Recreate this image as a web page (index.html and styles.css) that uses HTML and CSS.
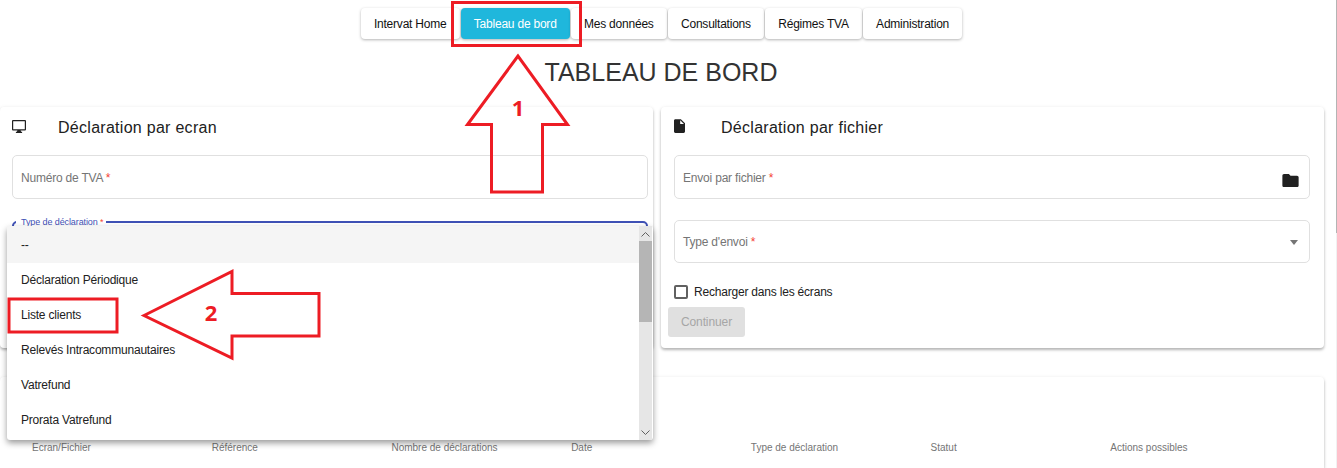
FILE: index.html
```html
<!DOCTYPE html>
<html lang="fr">
<head>
<meta charset="utf-8">
<title>Tableau de bord</title>
<link rel="stylesheet" href="styles.css">
</head>
<body>
<div class="page">
  <main class="main">
    <nav class="nav">
      <a class="nav-btn">Intervat Home</a>
      <a class="nav-btn nav-btn-active">Tableau de bord</a>
      <a class="nav-btn">Mes données</a>
      <a class="nav-btn">Consultations</a>
      <a class="nav-btn">Régimes TVA</a>
      <a class="nav-btn">Administration</a>
    </nav>
    <h1 class="title">TABLEAU DE BORD</h1>
    <div class="cards">
      <section class="card card-left">
        <header class="card-head">
          <svg class="icon icon-monitor" viewBox="0 0 14 13"><path fill-rule="evenodd" d="M1 0h12a1 1 0 0 1 1 1v8.400a1 1 0 0 1-1 1H8.600l.5 1.400h1v1.200H3.900v-1.200h1l.5-1.400H1a1 1 0 0 1-1-1V1a1 1 0 0 1 1-1zm.2 1.200v8h11.600v-8z"/></svg>
          <h2 class="card-title">Déclaration par ecran</h2>
        </header>
        <div class="field field-first"><span class="label">Numéro de TVA <i class="req">*</i></span></div>
        <fieldset class="focus-field">
          <legend class="focus-legend">Type de déclaration <i class="req-blue">*</i></legend>
        </fieldset>
        <div class="menu">
          <ul class="menu-list">
            <li class="menu-item menu-item-selected">--</li>
            <li class="menu-item">Déclaration Périodique</li>
            <li class="menu-item">Liste clients</li>
            <li class="menu-item">Relevés Intracommunautaires</li>
            <li class="menu-item">Vatrefund</li>
            <li class="menu-item">Prorata Vatrefund</li>
          </ul>
          <div class="menu-scroll">
            <svg class="chev" viewBox="0 0 9 5"><path d="M.5 4.500l4-4 4 4"/></svg>
            <div class="menu-thumb"></div>
            <svg class="chev chev-down" viewBox="0 0 9 5"><path d="M.5.500l4 4 4-4"/></svg>
          </div>
        </div>
      </section>
      <section class="card card-right">
        <header class="card-head">
          <svg class="icon icon-file" viewBox="4 2 16 20"><path d="M6 2c-1.100 0-1.990.9-1.990 2L4 20c0 1.100.89 2 1.990 2H18c1.100 0 2-.9 2-2V8l-6-6H6zm7 7V3.500L18.500 9H13z"/></svg>
          <h2 class="card-title">Déclaration par fichier</h2>
        </header>
        <div class="field field-first field-right"><span class="label">Envoi par fichier <i class="req">*</i></span>
          <svg class="icon-folder" viewBox="2 4 20 16"><path d="M10 4H4c-1.100 0-1.990.9-1.990 2L2 18c0 1.100.9 2 2 2h16c1.100 0 2-.9 2-2V8c0-1.100-.9-2-2-2h-8l-2-2z"/></svg>
        </div>
        <div class="field field-second field-right"><span class="label">Type d'envoi <i class="req">*</i></span><span class="caret"></span></div>
        <label class="check-row"><span class="checkbox"></span><span class="check-label">Recharger dans les écrans</span></label>
        <button class="btn-disabled" type="button">Continuer</button>
      </section>
    </div>
    <section class="card card-table">
      <div class="table-head">
        <span>Ecran/Fichier</span>
        <span>Référence</span>
        <span>Nombre de déclarations</span>
        <span>Date</span>
        <span>Type de déclaration</span>
        <span>Statut</span>
        <span>Actions possibles</span>
      </div>
    </section>
  </main>
  <div class="rail"><div class="rail-thumb"></div></div>
</div>
<svg class="annot" viewBox="0 0 1337 468">
  <rect class="annot-line" x="452.500" y="2.500" width="128" height="43"/>
  <polygon class="annot-line" points="518,56 467.500,124.500 491.500,124.500 491.500,192 542.500,192 542.500,124.500 567.500,124.500"/>
  <rect class="annot-line" x="9" y="299" width="108" height="33"/>
  <polygon class="annot-line" points="144,315.500 232,271.500 232,293.500 319,293.500 319,336 232,336 232,358"/>
  <text class="annot-num" x="518" y="116">1</text>
  <text class="annot-num" x="211" y="321">2</text>
</svg>
</body>
</html>
```
FILE: styles.css
```css
* { box-sizing: border-box; }
html, body { margin: 0; height: 468px; overflow: hidden; background: #fff; }
body { font-family: "Liberation Sans", Arial, sans-serif; color: #212121; position: relative; }
.page { display: flex; height: 468px; }
.main { flex: 1; padding-right: 12px; min-width: 0; }
.rail { width: 1px; background: #f1f1f1; }
.rail-thumb { height: 233px; background: #b4b4b4; }

.nav { display: flex; justify-content: center; gap: 1px; padding-top: 8px; padding-right: 1px; }
.nav-btn { height: 31px; padding: 0 13.200px; display: flex; align-items: center; font-size: 12px; letter-spacing: -.22px; color: #111; background: #fff; border-radius: 4px; box-shadow: 0 1px 3px rgba(0,0,0,.3); }
.nav-btn-active { background: #1fb7dc; color: #fff; }

.title { margin: 18px 0 20px; padding-right: 2px; height: 30px; line-height: 30px; font-size: 25px; font-weight: 400; text-align: center; color: #333; }

.cards { display: grid; grid-template-columns: 653px 663px; column-gap: 8px; }
.card { background: #fff; border-radius: 4px; box-shadow: 0 2px 3px rgba(0,0,0,.28), 0 0 4px rgba(0,0,0,.05); }
.card-left { position: relative; padding: 0 5px 0 12px; }
.card-right { padding: 0 14px 11px 13px; }
.card-head { height: 40px; margin-bottom: 8px; display: flex; align-items: center; }
.card-title { margin: 0; padding-top: 2px; font-size: 16px; letter-spacing: .28px; font-weight: 400; color: #212121; }
.icon { fill: #212121; display: block; margin-top: -2px; }
.icon-monitor { width: 14px; height: 13px; margin-right: 32px; }
.icon-file { width: 11px; height: 14px; margin-right: 36px; }

.field { border: 1px solid #e0e0e0; border-radius: 5px; display: flex; align-items: center; justify-content: space-between; padding: 1px 10px 0 8px; }
.field-first { height: 44px; }
.field-second { height: 43px; margin-top: 21px; }
.label { font-size: 12px; letter-spacing: -.2px; color: #757575; }
.req { color: #f44336; font-style: normal; }
.req-blue { color: #f44336; font-style: normal; }
.icon-folder { width: 17px; height: 13px; fill: #212121; margin-top: 6px; }
.caret { width: 0; height: 0; border-left: 4.500px solid transparent; border-right: 4.500px solid transparent; border-top: 5px solid #757575; margin-right: 1px; }

.focus-field { margin: 17px 0 0; padding: 0 2px; height: 48px; border: 2px solid #3f51b5; border-radius: 5px; }
.focus-legend { margin: 0; padding: 1px 3px 0 5px; font-size: 9px; letter-spacing: -.1px; line-height: 10px; color: #3f51b5; }

.menu { position: absolute; top: 119px; left: 7px; width: 646px; height: 214px; display: flex; background: #fff; border-radius: 3px; box-shadow: 0 3px 6px rgba(0,0,0,.4); z-index: 3; }
.menu-list { flex: 1; margin: 0; padding: 0; list-style: none; }
.menu-item { height: 34.800px; padding-left: 14px; display: flex; align-items: center; font-size: 12px; letter-spacing: -.2px; color: #212121; }
.menu-item-selected { height: 37px; background: #f5f5f5; }
.menu-scroll { width: 13px; margin-right: 1px; background: #e6e6e6; display: flex; flex-direction: column; align-items: center; padding-top: 6px; }
.menu-thumb { width: 13px; height: 81px; margin-top: 4px; background: #b5b5b5; }
.chev { width: 9px; height: 5px; fill: none; stroke: #606060; stroke-width: 1; display: block; }
.chev-down { margin-top: auto; margin-bottom: 5px; }

.check-row { display: flex; align-items: center; height: 14px; margin-top: 22px; }
.checkbox { width: 14px; height: 14px; border: 2px solid #616161; border-radius: 2px; margin-right: 6px; }
.check-label { font-size: 12px; letter-spacing: -.2px; color: #212121; }
.btn-disabled { display: block; width: 77px; height: 30px; margin: 8px 0 0 -6px; padding: 0; border: 0; border-radius: 3px; background: #e0e0e0; color: #a6a6a6; font: 12px "Liberation Sans", Arial, sans-serif; letter-spacing: -.1px; }

.card-table { margin-top: 29px; height: 91px; padding: 64px 34px 0 32px; border-radius: 4px 4px 0 0; }
.table-head { display: grid; grid-template-columns: repeat(7, 1fr); font-size: 10px; line-height: 14px; color: #757575; }

.annot { position: absolute; left: 0; top: 0; width: 1337px; height: 468px; z-index: 5; pointer-events: none; }
.annot-line { fill: none; stroke: #ed1c24; stroke-width: 3; }
.annot-num { fill: #ed1c24; font-family: "Open Sans", sans-serif; font-weight: 700; font-size: 22px; text-anchor: middle; }
```
